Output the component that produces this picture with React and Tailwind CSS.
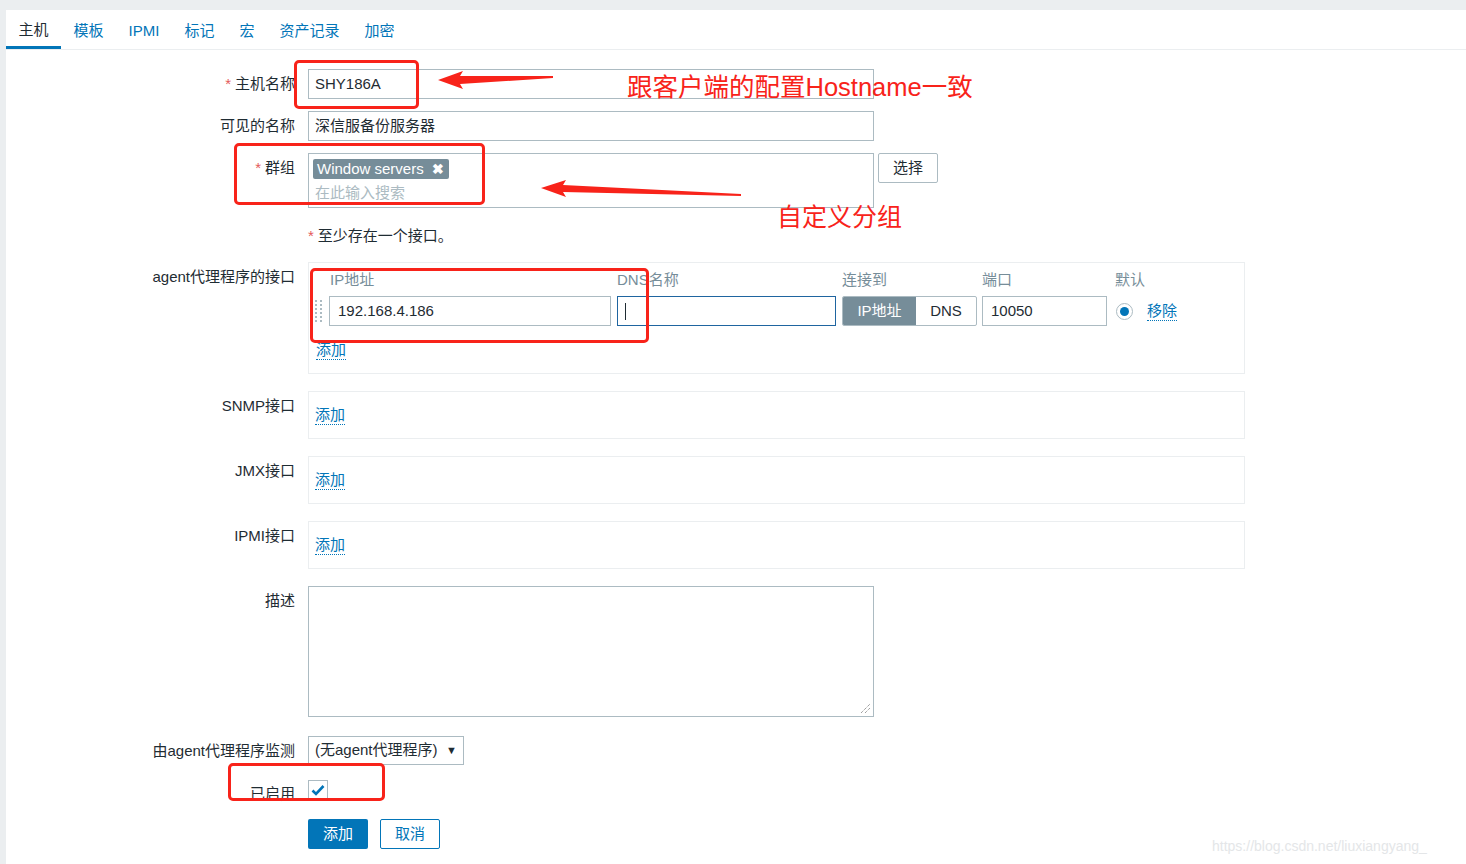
const font = "font-['Liberation_Sans','Noto_Sans_CJK_SC',sans-serif]";

function Label({ children, required }) {
  return (
    <div className="w-[289px] shrink-0 pt-[5px] pr-0 text-right leading-[20px] text-[#1f2c33]">
      {required && <span className="mr-[4px] text-[#e45959]">*</span>}
      {children}
    </div>
  );
}

function Row({ label, required, children, className = '' }) {
  return (
    <div className={`flex gap-[13px] ${className}`}>
      <Label required={required}>{label}</Label>
      <div className="min-w-0">{children}</div>
    </div>
  );
}

function AddLink() {
  return (
    <span className="inline-block border-b border-dotted border-[#0275b8] leading-[18px] text-[#0275b8]">
      添加
    </span>
  );
}

function EmptyInterface({ label }) {
  return (
    <Row label={label}>
      <div className="h-[48px] w-[937px] border border-[#ebeef0] pl-[6px] pt-[12px]">
        <AddLink />
      </div>
    </Row>
  );
}

function DragHandle() {
  return (
    <div className="grid w-[8px] grid-cols-2 gap-x-[2px] gap-y-[2px]">
      {Array.from({ length: 12 }).map((_, i) => (
        <span key={i} className="h-[2px] w-[2px] bg-[#acbbc2]" />
      ))}
    </div>
  );
}

function Annotations() {
  return (
    <div className="pointer-events-none absolute inset-0">
      <div className="absolute left-[294px] top-[60px] h-[49px] w-[125px] rounded-[5px] border-[3px] border-[#f8231a]" />
      <div className="absolute left-[234px] top-[143px] h-[62px] w-[251px] rounded-[5px] border-[3px] border-[#f8231a]" />
      <div className="absolute left-[310px] top-[268px] h-[75px] w-[339px] rounded-[5px] border-[3px] border-[#f8231a]" />
      <div className="absolute left-[228px] top-[763px] h-[38px] w-[157px] rounded-[5px] border-[3px] border-[#f8231a]" />
      <svg className="absolute left-0 top-0" width="1466" height="864">
        <polygon points="438,80 463,71 460,76 553,76 553,78 460,84 463,89" fill="#f8231a" />
        <polygon points="541,188 566,180 563,185 741,194 741,196 563,192 566,197" fill="#f8231a" />
      </svg>
      <div className="absolute left-[627px] top-[70px] whitespace-nowrap text-[25.5px] leading-[34px] text-[#f8231a]">
        跟客户端的配置Hostname一致
      </div>
      <div className="absolute left-[777px] top-[200px] whitespace-nowrap text-[25px] leading-[34px] text-[#f8231a]">
        自定义分组
      </div>
      <div className="absolute left-[1212px] top-[836px] whitespace-nowrap text-[14px] leading-[20px] text-[#e4e6e8]">
        https://blog.csdn.net/liuxiangyang_
      </div>
    </div>
  );
}

export default function App() {
  const tabs = ['主机', '模板', 'IPMI', '标记', '宏', '资产记录', '加密'];
  return (
    <div className={`relative h-[864px] w-[1466px] overflow-hidden bg-[#ebeef0] pl-[6px] pt-[10px] text-[15px] ${font}`}>
      <div className="h-full bg-white">
        {/* Tabs */}
        <div className="flex h-[40px] border-b border-[#ebeef0]">
          {tabs.map((t, i) => (
            <div
              key={t}
              className={`flex items-center px-[12.5px] pt-[4px] ${
                i === 0 ? 'border-b-[3px] border-[#0275b8] text-[#1f2c33]' : 'text-[#0275b8]'
              }`}
            >
              {t}
            </div>
          ))}
        </div>

        {/* Form */}
        <div className="flex flex-col pt-[19px]">
          <Row label="主机名称" required>
            <div className="flex h-[30px] w-[566px] items-center border border-[#acbbc2] px-[6px] text-[#1f2c33]">SHY186A</div>
          </Row>

          <Row label="可见的名称" className="mt-[12px]">
            <div className="flex h-[30px] w-[566px] items-center border border-[#acbbc2] px-[6px] text-[#1f2c33]">深信服备份服务器</div>
          </Row>

          <Row label="群组" required className="mt-[12px]">
            <div className="flex gap-[4px]">
              <div className="h-[55px] w-[566px] border border-[#acbbc2] px-[4px] pt-[4px]">
                <div className="inline-flex h-[20px] items-center gap-[8px] rounded-[2px] bg-[#768d99] pl-[4px] pr-[5px] text-white">
                  <span>Window servers</span>
                  <span className="text-[14px] font-bold">✖</span>
                </div>
                <div className="mt-[2px] pl-[2px] leading-[20px] text-[#acbbc2]">在此输入搜索</div>
              </div>
              <div className="flex h-[30px] w-[60px] items-center justify-center rounded-[2px] border border-[#acbbc2] text-[#1f2c33]">选择</div>
            </div>
          </Row>

          <Row label="" className="mt-[18px]">
            <div className="leading-[20px] text-[#1f2c33]">
              <span className="mr-[4px] text-[#e45959]">*</span>至少存在一个接口。
            </div>
          </Row>

          <Row label="agent代理程序的接口" className="mt-[16px]">
            <div className="h-[112px] w-[937px] border border-[#ebeef0] pl-[6px] pt-[7px]">
              <div className="flex leading-[20px] text-[#768d99]">
                <div className="w-[302px] pl-[15px]">IP地址</div>
                <div className="w-[225px]">DNS名称</div>
                <div className="w-[140px]">连接到</div>
                <div className="w-[133px]">端口</div>
                <div>默认</div>
              </div>
              <div className="mt-[6px] flex items-center">
                <DragHandle />
                <div className="ml-[6px] flex h-[30px] w-[282px] items-center border border-[#acbbc2] px-[8px] text-[#1f2c33]">192.168.4.186</div>
                <div className="ml-[6px] flex h-[30px] w-[219px] items-center border border-[#1f65a0] px-[7px]">
                  <span className="h-[17px] w-[1px] bg-[#1f2c33]" />
                </div>
                <div className="ml-[6px] flex h-[30px] w-[135px] overflow-hidden rounded-[2px] border border-[#acbbc2]">
                  <div className="flex w-[73px] items-center justify-center bg-[#768d99] text-white">IP地址</div>
                  <div className="flex flex-1 items-center justify-center text-[#1f2c33]">DNS</div>
                </div>
                <div className="ml-[5px] flex h-[30px] w-[125px] items-center border border-[#acbbc2] px-[8px] text-[#1f2c33]">10050</div>
                <div className="ml-[9px] flex h-[17px] w-[17px] items-center justify-center rounded-full border border-[#acbbc2]">
                  <span className="h-[9px] w-[9px] rounded-full bg-[#0275b8]" />
                </div>
                <span className="ml-[14px] inline-block border-b border-dotted border-[#0275b8] leading-[18px] text-[#0275b8]">移除</span>
              </div>
              <div className="mt-[13px] pl-[1px]">
                <AddLink />
              </div>
            </div>
          </Row>

          <div className="mt-[17px] flex flex-col gap-[17px]">
            <EmptyInterface label="SNMP接口" />
            <EmptyInterface label="JMX接口" />
            <EmptyInterface label="IPMI接口" />
          </div>

          <Row label="描述" className="mt-[17px]">
            <div className="relative h-[131px] w-[566px] border border-[#acbbc2]">
              <svg className="absolute bottom-[2px] right-[2px]" width="11" height="11">
                <path d="M1 10 L10 1 M5 10 L10 5" stroke="#777" strokeWidth="1" strokeDasharray="1 1" />
              </svg>
            </div>
          </Row>

          <Row label="由agent代理程序监测" className="mt-[19px]">
            <div className="flex h-[29px] w-[156px] items-center justify-between border border-[#acbbc2] pl-[6px] pr-[6px] text-[#1f2c33]">
              <span>(无agent代理程序)</span>
              <span className="text-[11px]">▼</span>
            </div>
          </Row>

          <Row label="已启用" className="mt-[14px]">
            <div className="mt-[1px] flex h-[20px] w-[20px] items-center justify-center border border-[#acbbc2]">
              <svg width="14" height="12" viewBox="0 0 14 12">
                <path d="M1.5 6.5 L5 10 L12.5 2" fill="none" stroke="#0275b8" strokeWidth="2.6" />
              </svg>
            </div>
          </Row>

          <Row label="" className="mt-[15px]">
            <div className="flex gap-[12px]">
              <div className="flex h-[30px] w-[60px] items-center justify-center rounded-[2px] bg-[#0275b8] text-white">添加</div>
              <div className="flex h-[30px] w-[60px] items-center justify-center rounded-[2px] border border-[#0275b8] bg-white text-[#0275b8]">取消</div>
            </div>
          </Row>
        </div>
      </div>
      <Annotations />
    </div>
  );
}
